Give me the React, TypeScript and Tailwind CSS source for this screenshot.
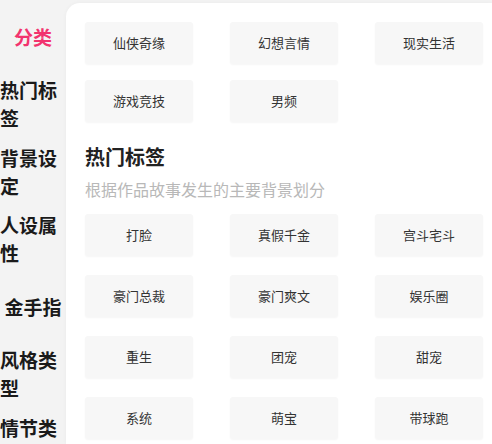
const sideItems = ["分类", "热门标签", "背景设定", "人设属性", "金手指", "风格类型", "情节类型"];

const genres = ["仙侠奇缘", "幻想言情", "现实生活", "游戏竞技", "男频"];
const hotTags = ["打脸", "真假千金", "宫斗宅斗", "豪门总裁", "豪门爽文", "娱乐圈", "重生", "团宠", "甜宠", "系统", "萌宝", "带球跑"];

function Tag({ label }: { label: string }) {
  return (
    <div className="flex h-[42px] items-center justify-center rounded-[3px] bg-[#f7f7f7] text-[13px] text-[#333] shadow-[0_1px_2px_rgba(0,0,0,0.04)]">
      {label}
    </div>
  );
}

export default function App() {
  return (
    <div
      className="flex h-[444px] w-[492px] overflow-hidden bg-[#f3f3f3]"
      style={{ fontFamily: '"Noto Sans CJK SC", "Noto Sans", sans-serif' }}
    >
      <aside className="w-[66px] shrink-0 pt-[3px]">
        {sideItems.map((item, i) => (
          <div key={item} className="flex h-[67.5px] items-center justify-center">
            <div
              className={
                i === 0
                  ? "text-[19px] font-bold leading-[28px] text-[#f2336e]"
                  : "text-[19px] font-bold leading-[28px] text-[#1a1a1a]"
              }
            >
              {item}
            </div>
          </div>
        ))}
      </aside>

      <main className="mt-[3px] flex-1 rounded-tl-[14px] bg-white pl-[19px] pt-[19px] shadow-[0_0_4px_rgba(0,0,0,0.04)]">
        <div className="grid grid-cols-[108px_108px_108px] gap-x-[37px] gap-y-[16px]">
          {genres.map((g) => (
            <Tag key={g} label={g} />
          ))}
        </div>

        <h2 className="mt-[21px] text-[20px] font-bold leading-[28px] text-[#222]">热门标签</h2>
        <p className="mt-[6px] text-[16px] leading-[24px] text-[#b8b8b8]">根据作品故事发生的主要背景划分</p>

        <div className="mt-[13px] grid grid-cols-[108px_108px_108px] gap-x-[37px] gap-y-[19px]">
          {hotTags.map((t) => (
            <Tag key={t} label={t} />
          ))}
        </div>
      </main>
    </div>
  );
}
